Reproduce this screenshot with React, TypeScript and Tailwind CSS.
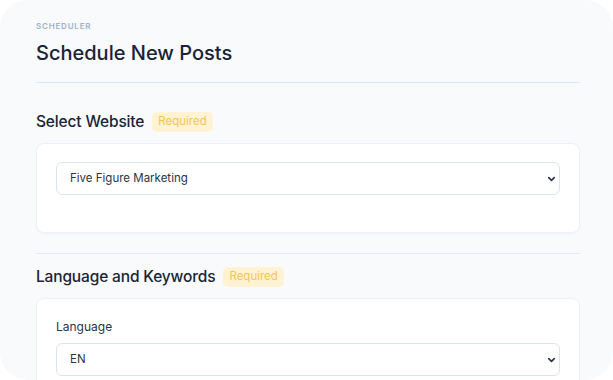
import { ChevronDown } from 'lucide-react'

type SelectFieldProps = {
  value: string
  label?: string
}

function RequiredBadge() {
  return (
    <span className="inline-flex h-[20px] items-center rounded-[5px] bg-[#fff3d4] px-[6px] text-[11.5px] text-[#f5c452]">
      Required
    </span>
  )
}

function SelectField({ value, label }: SelectFieldProps) {
  return (
    <div>
      {label ? <p className="mb-[8px] text-[12px] leading-[16px] text-[#2b3445]">{label}</p> : null}
      <div className="relative">
        <select
          className="h-[33px] w-full appearance-none rounded-[6px] border border-[#dbe3ef] bg-white pl-[13px] text-[11.5px] text-[#2b3445] outline-none"
          defaultValue={value}
        >
          <option>{value}</option>
        </select>
        <ChevronDown
          className="pointer-events-none absolute right-[3px] top-1/2 h-[11px] w-[11px] -translate-y-1/2 text-[#2b3445]"
          strokeWidth={3.5}
        />
      </div>
    </div>
  )
}

export default function App() {
  return (
    <div className="h-[380px] w-[613px] bg-white font-['Inter',sans-serif]">
      <div className="h-[380px] overflow-hidden rounded-[28px] bg-[#f8fafc] pl-[36px] pr-[33px] pt-[20px]">
        <p className="text-[8px] font-semibold uppercase leading-[12px] tracking-[0.1em] text-[#9fb1cb]">Scheduler</p>
        <h1 className="mt-[7px] text-[20px] font-medium leading-[28px] text-[#1a2336]">Schedule New Posts</h1>
        <div className="mt-[15px] h-px bg-[#dde7f2]" />

        <section className="mt-[29px]">
          <div className="flex items-center gap-[8px]">
            <h2 className="text-[15.5px] font-medium leading-[20px] tracking-[-0.01em] text-[#1a2336]">Select Website</h2>
            <RequiredBadge />
          </div>
          <div className="mt-[11px] h-[90px] rounded-[8px] border border-[#edf1f7] bg-white px-[19px] pt-[18px] shadow-[0_1px_3px_rgba(30,41,59,0.04)]">
            <SelectField value="Five Figure Marketing" />
          </div>
        </section>

        <div className="mt-[20px] h-px bg-[#e4e9f2]" />

        <section className="mt-[13px]">
          <div className="flex items-center gap-[8px]">
            <h2 className="text-[15.5px] font-medium leading-[20px] tracking-[-0.01em] text-[#1a2336]">Language and Keywords</h2>
            <RequiredBadge />
          </div>
          <div className="mt-[11px] rounded-[8px] border border-[#edf1f7] bg-white px-[19px] pb-[20px] pt-[20px] shadow-[0_1px_3px_rgba(30,41,59,0.04)]">
            <SelectField label="Language" value="EN" />
          </div>
        </section>
      </div>
    </div>
  )
}
